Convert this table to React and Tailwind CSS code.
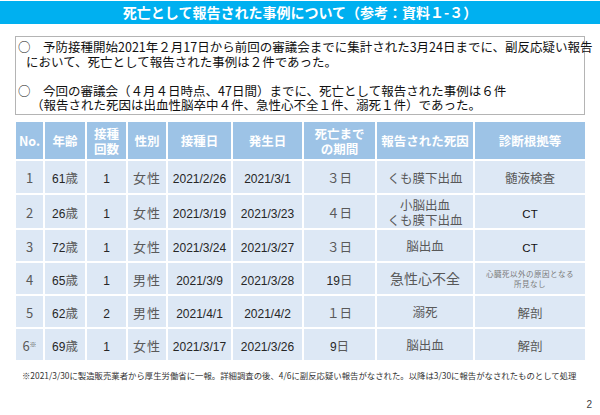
const JP = { fontFamily: '"Noto Sans CJK JP", "Noto Sans", sans-serif' };

const COLS = [29, 42, 41, 40, 65, 71, 73, 98, 112];

const HEAD = [
  "No.",
  "年齢",
  ["接種", "回数"],
  "性別",
  "接種日",
  "発生日",
  ["死亡まで", "の期間"],
  "報告された死因",
  "診断根拠等",
];

const ROWS = [
  { no: "1", age: "61", dose: "1", sex: "女性", vac: "2021/2/26", onset: "2021/3/1", days: ["３", true], cause: ["くも膜下出血"], basis: "髄液検査", h: "h-[34px]" },
  { no: "2", age: "26", dose: "1", sex: "女性", vac: "2021/3/19", onset: "2021/3/23", days: ["４", true], cause: ["小脳出血", "くも膜下出血"], basis: "CT", h: "h-[35px]" },
  { no: "3", age: "72", dose: "1", sex: "女性", vac: "2021/3/24", onset: "2021/3/27", days: ["３", true], cause: ["脳出血"], basis: "CT", h: "h-[33px]" },
  { no: "4", age: "65", dose: "1", sex: "男性", vac: "2021/3/9", onset: "2021/3/28", days: ["19", false], cause: ["急性心不全"], basis: "small", h: "h-[33px]" },
  { no: "5", age: "62", dose: "2", sex: "男性", vac: "2021/4/1", onset: "2021/4/2", days: ["１", true], cause: ["溺死"], basis: "解剖", h: "h-[33px]" },
  { no: "6", age: "69", dose: "1", sex: "女性", vac: "2021/3/17", onset: "2021/3/26", days: ["9", false], cause: ["脳出血"], basis: "解剖", h: "h-[33px]", mark: true },
];

function Num({ children }) {
  return (
    <span className="font-['Liberation_Sans'] text-[12px] text-[#262626]">{children}</span>
  );
}

function Gray({ children, size = "text-[12.5px]" }) {
  return (
    <span style={JP} className={`${size} text-[#595959]`}>
      {children}
    </span>
  );
}

function Basis({ value }) {
  if (value === "CT") {
    return <span className="font-['Liberation_Sans'] text-[11.5px] text-[#111]">CT</span>;
  }
  if (value === "small") {
    return (
      <span style={JP} className="block text-[7.5px] leading-[10px] tracking-[0.5px] text-[#7a7a7a]">
        心臓死以外の原因となる
        <br />
        所見なし
      </span>
    );
  }
  return <Gray>{value}</Gray>;
}

export default function App() {
  return (
    <div className="relative h-[415px] w-[600px] overflow-hidden bg-white">
      <div
        style={JP}
        className="mt-[1px] flex h-[23px] items-center justify-center bg-[#00b0f0] text-[14px] font-bold text-white"
      >
        死亡として報告された事例について（参考：資料１-３）
      </div>

      <div
        style={JP}
        className="mx-[15px] mt-[12px] h-[79px] border border-[#b4b4b4] pt-[3px] text-[12.5px] leading-[14.5px] text-[#111]"
      >
        <div className="pl-[2px] whitespace-nowrap">○　予防接種開始2021年２月17日から前回の審議会までに集計された3月24日までに、副反応疑い報告</div>
        <div className="pl-[10px] whitespace-nowrap">において、死亡として報告された事例は２件であった。</div>
        <div className="h-[14.5px]" />
        <div className="pl-[2px] whitespace-nowrap">○　今回の審議会（４月４日時点、47日間）までに、死亡として報告された事例は６件</div>
        <div className="pl-[15px] whitespace-nowrap">（報告された死因は出血性脳卒中４件、急性心不全１件、溺死１件）であった。</div>
      </div>

      <table className="ml-[14px] mt-[5px] w-[573px] table-fixed border-collapse">
        <colgroup>
          {COLS.map((w, i) => (
            <col key={i} style={{ width: w }} />
          ))}
        </colgroup>
        <thead>
          <tr className="h-[39px] bg-[#9dc3e6]">
            {HEAD.map((h, i) => (
              <th
                key={i}
                style={JP}
                className="border-2 border-white p-0 text-center text-[12.5px] font-bold leading-[15px] text-white"
              >
                {Array.isArray(h) ? (
                  <>
                    {h[0]}
                    <br />
                    {h[1]}
                  </>
                ) : (
                  h
                )}
              </th>
            ))}
          </tr>
        </thead>
        <tbody>
          {ROWS.map((r) => (
            <tr key={r.no} className={`${r.h} bg-[#dde8f5]`}>
              <td className="border-2 border-white p-0 text-center">
                <Gray size="text-[13px]">{r.no}</Gray>
                {r.mark ? (
                  <span style={JP} className="relative top-[-4px] text-[7px] text-[#595959]">
                    ※
                  </span>
                ) : null}
              </td>
              <td className="border-2 border-white p-0 text-center">
                <Num>{r.age}</Num>
                <Gray>歳</Gray>
              </td>
              <td className="border-2 border-white p-0 text-center">
                <Num>{r.dose}</Num>
              </td>
              <td className="border-2 border-white p-0 text-center tracking-[1px]">
                <Gray size="text-[13px]">{r.sex}</Gray>
              </td>
              <td className="border-2 border-white p-0 text-center">
                <Num>{r.vac}</Num>
              </td>
              <td className="border-2 border-white p-0 text-center">
                <Num>{r.onset}</Num>
              </td>
              <td className="border-2 border-white p-0 text-center">
                {r.days[1] ? <Gray>{r.days[0]}</Gray> : <Num>{r.days[0]}</Num>}
                <Gray>日</Gray>
              </td>
              <td className="border-2 border-white p-0 text-center leading-[15px]">
                {r.cause.length > 1 ? (
                  <Gray size="text-[12.5px]">
                    {r.cause[0]}
                    <br />
                    {r.cause[1]}
                  </Gray>
                ) : (
                  <Gray size={r.cause[0] === "急性心不全" ? "text-[14px]" : "text-[12.5px]"}>
                    {r.cause[0]}
                  </Gray>
                )}
              </td>
              <td className="border-2 border-white p-0 text-center">
                <Basis value={r.basis} />
              </td>
            </tr>
          ))}
        </tbody>
      </table>

      <div
        style={JP}
        className="ml-[22px] mt-[8px] whitespace-nowrap text-[8.4px] leading-[10px] text-[#333]"
      >
        ※2021/3/30に製造販売業者から厚生労働省に一報。詳細調査の後、4/6に副反応疑い報告がなされた。以降は3/30に報告がなされたものとして処理
      </div>

      <div className="mr-[8px] mt-[19px] text-right font-['Liberation_Sans'] text-[10px] leading-[12px] text-[#404040]">
        2
      </div>
    </div>
  );
}
